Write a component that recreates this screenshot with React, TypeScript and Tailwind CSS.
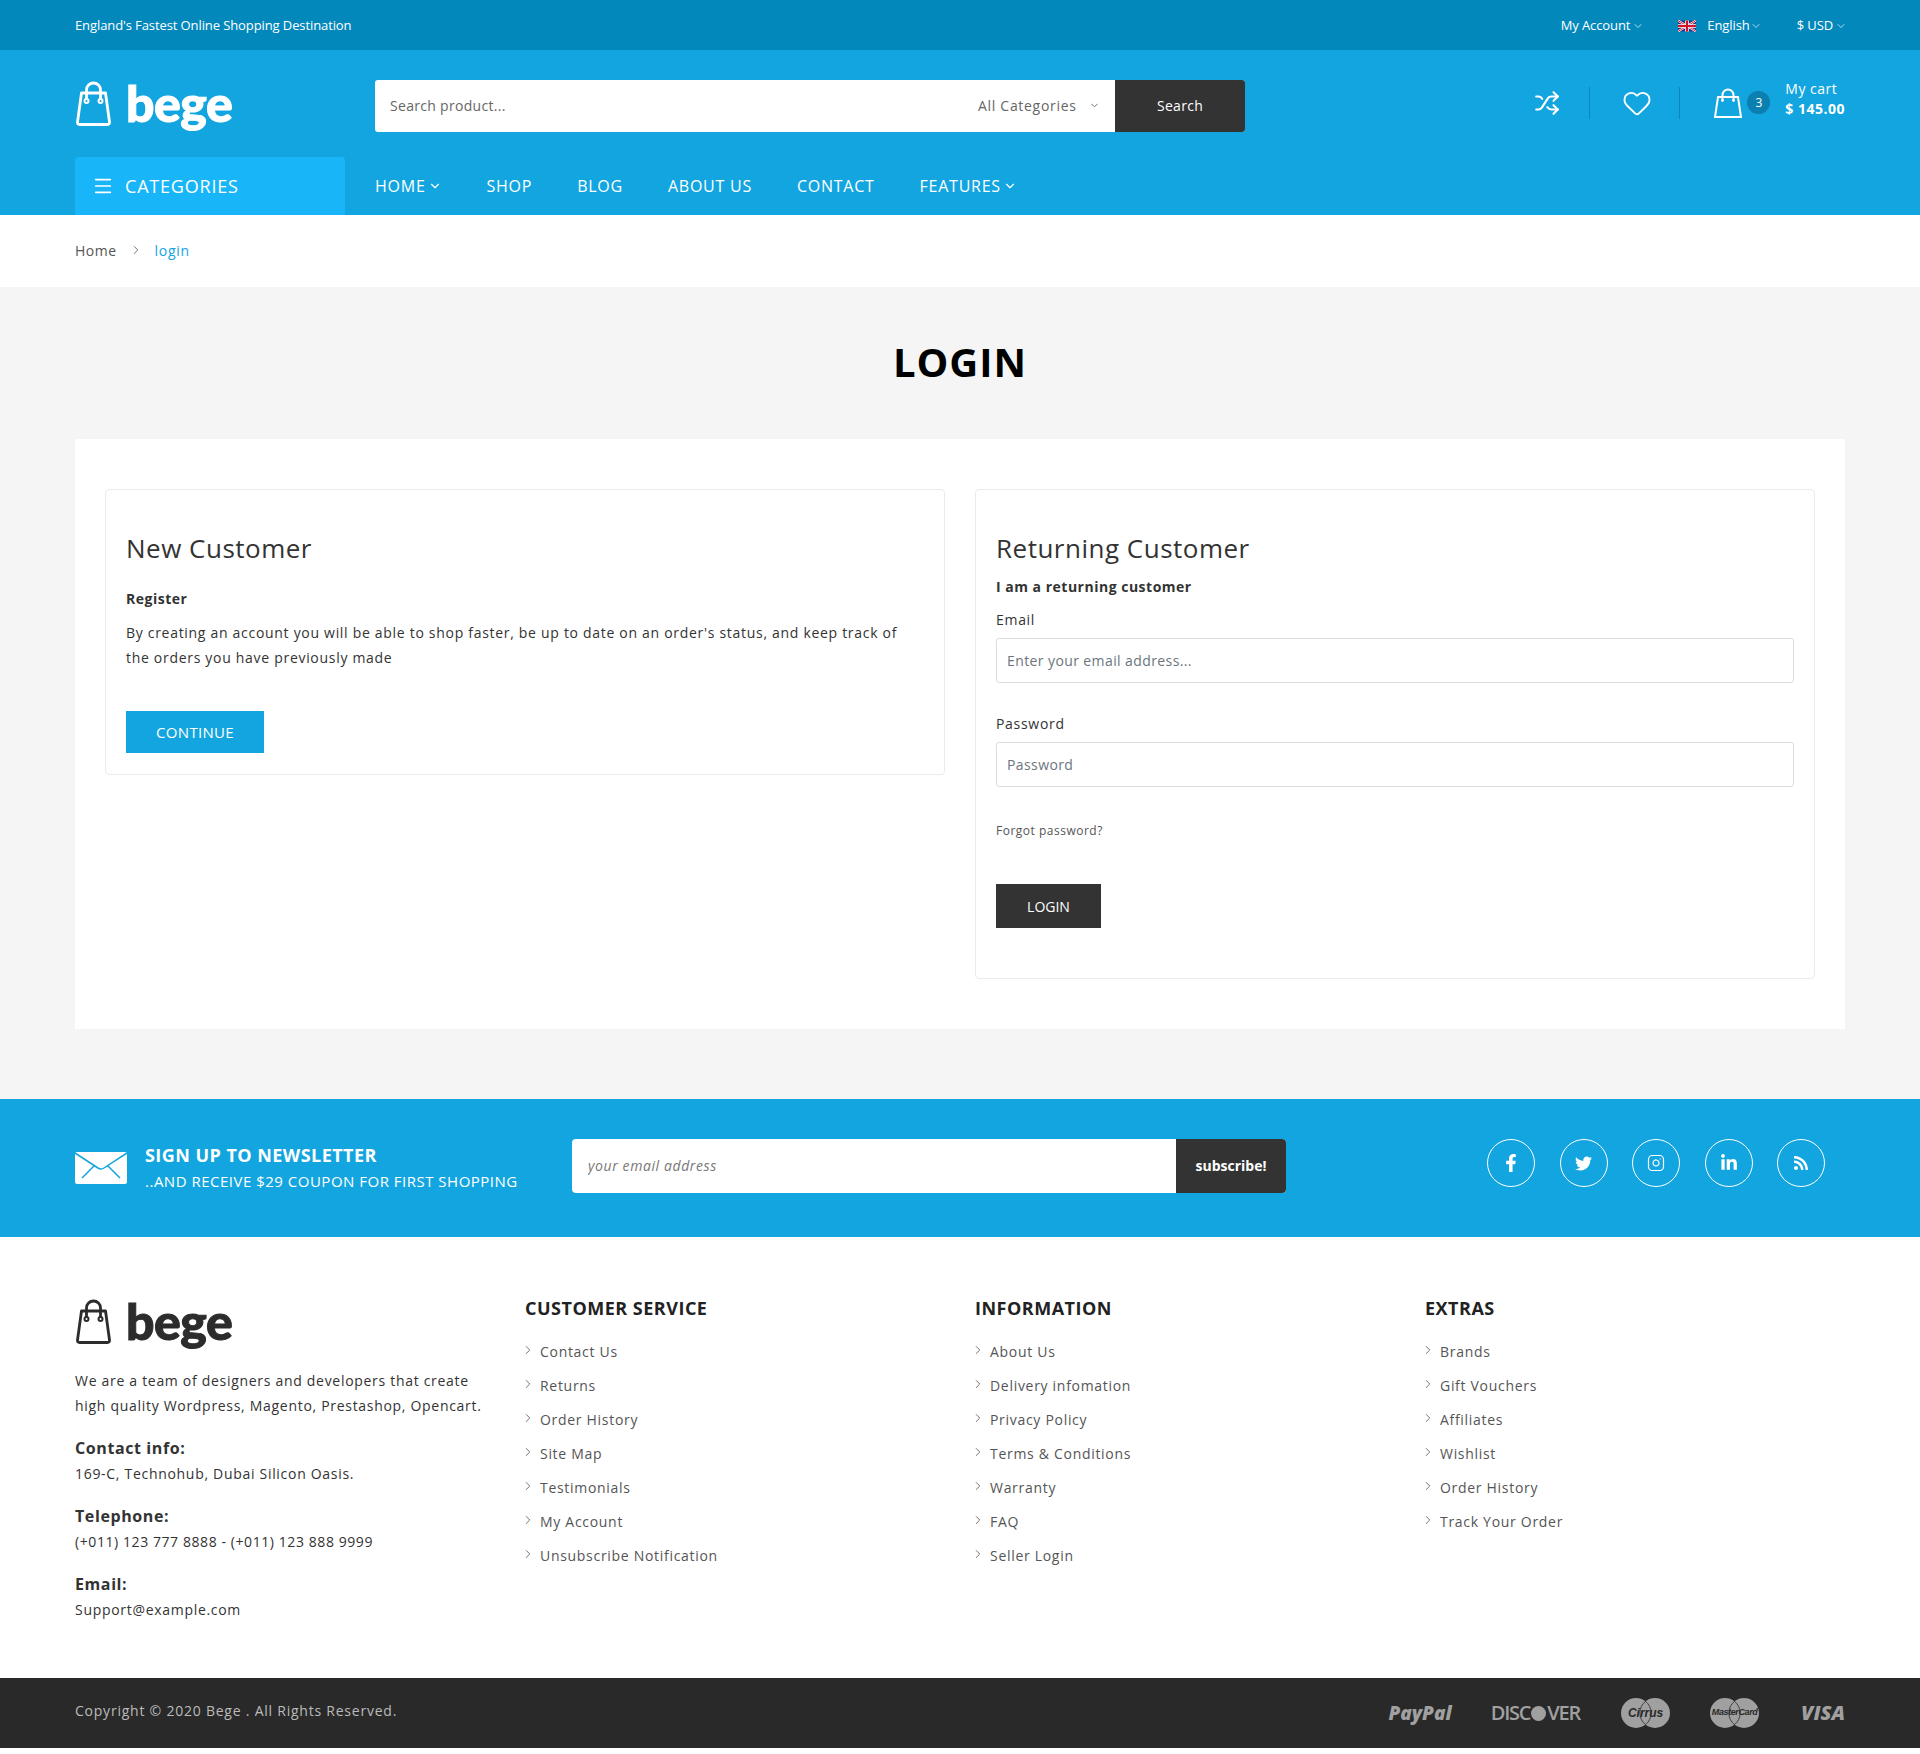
import { ChevronDown, ChevronRight, Heart, Instagram, Menu, Shuffle } from 'lucide-react';
import { FaFacebookF, FaLinkedinIn, FaRss, FaTwitter } from 'react-icons/fa';

const customerService = ['Contact Us', 'Returns', 'Order History', 'Site Map', 'Testimonials', 'My Account', 'Unsubscribe Notification'];
const information = ['About Us', 'Delivery infomation', 'Privacy Policy', 'Terms & Conditions', 'Warranty', 'FAQ', 'Seller Login'];
const extras = ['Brands', 'Gift Vouchers', 'Affiliates', 'Wishlist', 'Order History', 'Track Your Order'];

function BagIcon({ className }: { className?: string }) {
  return (
    <svg viewBox="0 0 36 46" fill="none" stroke="currentColor" className={className}>
      <path d="M6 13h24l4 29q.2 2.500-2 2.500H4q-2.200 0-2-2.500z" strokeWidth="2.800" strokeLinejoin="round" />
      <path d="M11 19v-9a7 7 0 0 1 14 0v9" strokeWidth="2.800" />
      <circle cx="11" cy="21" r="2" strokeWidth="2" />
      <circle cx="25" cy="21" r="2" strokeWidth="2" />
    </svg>
  );
}

function Logo({ className }: { className?: string }) {
  return (
    <div className={`flex h-[52px] items-center ${className}`}>
      <BagIcon className="h-[46px] w-[37px]" />
      <span className="ml-[14px] font-['Lato'] text-[50px] leading-none font-black tracking-[-0.5px] [-webkit-text-stroke:1px_currentColor]">
        bege
      </span>
    </div>
  );
}

function UkFlag() {
  return (
    <svg viewBox="0 0 60 36" className="h-3 w-[18px]">
      <rect width="60" height="36" fill="#23367e" />
      <path d="M0 0l60 36M60 0L0 36" stroke="#fff" strokeWidth="7" />
      <path d="M0 0l60 36M60 0L0 36" stroke="#d3122a" strokeWidth="3" />
      <path d="M30 0v36M0 18h60" stroke="#fff" strokeWidth="12" />
      <path d="M30 0v36M0 18h60" stroke="#d3122a" strokeWidth="7" />
    </svg>
  );
}

function TopBar() {
  return (
    <div className="flex h-[50px] items-center justify-between bg-[#0388bc] px-[75px] pt-px text-[13px] tracking-[-0.1px] text-white">
      <span>England's Fastest Online Shopping Destination</span>
      <div className="-mr-[2px] flex items-center">
        <span className="flex items-center gap-0.5">
          My Account <ChevronDown size={12} strokeWidth={1.4} />
        </span>
        <span className="ml-[34px] flex items-center">
          <UkFlag />
          <span className="ml-[11px]">English</span>
          <ChevronDown size={12} strokeWidth={1.4} />
        </span>
        <span className="ml-[35px] flex items-center gap-0.5">
          $ USD <ChevronDown size={12} strokeWidth={1.4} />
        </span>
      </div>
    </div>
  );
}

function BagShop() {
  return (
    <div className="flex items-center">
      <svg viewBox="0 0 28 30" fill="none" stroke="currentColor" strokeWidth="2" className="h-[30px] w-7">
        <path d="M4 9h20l3 20H1z" />
        <path d="M8.500 12V7a5.500 5.500 0 0 1 11 0v5" />
        <circle cx="8.500" cy="12.500" r="1" fill="currentColor" strokeWidth="1" />
        <circle cx="19.500" cy="12.500" r="1" fill="currentColor" strokeWidth="1" />
      </svg>
      <span className="ml-[5px] flex size-[23px] items-center justify-center rounded-full bg-[#0b7fb0] text-[12px]">3</span>
    </div>
  );
}

function Header() {
  return (
    <div className="bg-[#13a5df] text-white">
      <div className="flex h-[107px] items-center px-[75px] pb-[2px]">
        <Logo className="w-[300px]" />
        <div className="mt-[6px] flex h-[52px] w-[870px] overflow-hidden rounded-[3px] bg-white text-[14px] tracking-[0.5px]">
          <input
            placeholder="Search product..."
            className="min-w-0 flex-1 pl-[15px] font-['Open_Sans'] text-[14px] tracking-[0.3px] outline-none placeholder:text-[#666]"
          />
          <div className="flex w-[137px] items-center gap-3 tracking-[0.7px] text-[#666]">
            All Categories <ChevronDown size={11} strokeWidth={2} />
          </div>
          <button className="w-[130px] bg-[#333] tracking-[0.3px] text-white">Search</button>
        </div>
        <div className="ml-auto flex items-center">
          <Shuffle size={26} strokeWidth={1.9} />
          <div className="mr-[32px] ml-[29px] h-8 w-px bg-[#0b87b9]" />
          <Heart size={30} strokeWidth={1.5} />
          <div className="mr-[34px] ml-[27px] h-8 w-px bg-[#0b87b9]" />
          <BagShop />
          <div className="ml-[15px] -mt-[7px] text-[14px] leading-[20px] tracking-[0.5px]">
            <div>My cart</div>
            <div className="font-bold">$ 145.00</div>
          </div>
        </div>
      </div>
      <div className="flex h-[58px] items-stretch pl-[75px]">
        <div className="flex w-[270px] items-center rounded-t-[4px] bg-[#18b6f8] pl-[17px] text-[18px] font-medium tracking-[0.8px]">
          <Menu size={22} strokeWidth={1.8} className="mr-[11px]" />
          CATEGORIES
        </div>
        <nav className="ml-[30px] flex items-center gap-[45px] text-[16px] font-medium tracking-[0.75px]">
          <span className="flex items-center gap-[2px]">
            HOME <ChevronDown size={14} strokeWidth={2} />
          </span>
          <span>SHOP</span>
          <span>BLOG</span>
          <span>ABOUT US</span>
          <span>CONTACT</span>
          <span className="flex items-center gap-[2px]">
            FEATURES <ChevronDown size={14} strokeWidth={2} />
          </span>
        </nav>
      </div>
    </div>
  );
}

function CustomerCards() {
  return (
    <div className="flex items-start gap-[30px] bg-white px-[30px] py-[50px]">
      <div className="flex-1 rounded-[4px] border border-[#ebebeb] px-5 pt-[42px] pb-[21px]">
        <h2 className="text-[26px] leading-[32px] font-medium tracking-[0.5px] text-[#333]">New Customer</h2>
        <p className="mt-[25px] text-[14px] leading-[20px] font-bold tracking-[0.5px] text-[#333]">Register</p>
        <p className="mt-[11px] text-[14px] leading-[25px] tracking-[0.7px] text-[#333]">
          By creating an account you will be able to shop faster, be up to date on an order's status, and keep track of the orders you have previously made
        </p>
        <button className="mt-[41px] h-[42px] w-[138px] bg-[#13a5df] text-[15px] tracking-[0.3px] text-white">CONTINUE</button>
      </div>
      <div className="flex-1 rounded-[4px] border border-[#ebebeb] px-5 pt-[42px] pb-[50px]">
        <h2 className="text-[26px] leading-[32px] font-medium tracking-[0.5px] text-[#333]">Returning Customer</h2>
        <p className="mt-[13px] text-[14px] leading-[20px] font-bold tracking-[0.5px] text-[#333]">I am a returning customer</p>
        <label className="mt-[13px] block text-[14px] leading-[20px] tracking-[0.7px] text-[#333]">Email</label>
        <input
          placeholder="Enter your email address..."
          className="mt-[8px] block h-[45px] w-full rounded-[3px] border border-[#ddd] px-[10px] text-[14px] tracking-[0.4px] outline-none placeholder:text-[#6c757d]"
        />
        <label className="mt-[31px] block text-[14px] leading-[20px] tracking-[0.7px] text-[#333]">Password</label>
        <input
          placeholder="Password"
          className="mt-[8px] block h-[45px] w-full rounded-[3px] border border-[#ddd] px-[10px] text-[14px] tracking-[0.4px] outline-none placeholder:text-[#6c757d]"
        />
        <p className="mt-[35px] text-[12px] leading-[18px] tracking-[0.5px] text-[#555]">Forgot password?</p>
        <button className="mt-[44px] h-[44px] w-[105px] bg-[#333] text-[14px] text-white">LOGIN</button>
      </div>
    </div>
  );
}

function Newsletter() {
  return (
    <div className="flex h-[138px] items-start bg-[#13a5df] px-[75px] pt-10 text-white">
      <svg viewBox="0 0 52 32" className="mt-[13px] h-8 w-[52px] shrink-0">
        <rect width="52" height="32" rx="2" fill="#fff" />
        <path d="M0 1l23 15q3 2 6 0L52 1M7 26l13-13M45 26L32 13" fill="none" stroke="#13a5df" strokeWidth="1.500" />
      </svg>
      <div className="ml-[18px] w-[427px]">
        <div className="mt-[2px] text-[18px] leading-[28px] font-bold tracking-[0.45px]">SIGN UP TO NEWSLETTER</div>
        <div className="text-[15px] leading-[24px] tracking-[0.5px]">..AND RECEIVE $29 COUPON FOR FIRST SHOPPING</div>
      </div>
      <div className="flex h-[54px] w-[714px] overflow-hidden rounded-[4px] bg-white">
        <input
          placeholder="your email address"
          className="min-w-0 flex-1 -translate-y-px pl-[16px] text-[14px] italic tracking-[0.6px] outline-none placeholder:text-[#777]"
        />
        <button className="w-[110px] bg-[#333] pb-[2px] text-[14px] font-bold">subscribe!</button>
      </div>
      <div className="ml-auto flex gap-[24.500px] pr-5">
        <a className="flex size-12 items-center justify-center rounded-full border border-white"><FaFacebookF size={18} /></a>
        <a className="flex size-12 items-center justify-center rounded-full border border-white"><FaTwitter size={17} /></a>
        <a className="flex size-12 items-center justify-center rounded-full border border-white"><Instagram size={18} strokeWidth={1.6} /></a>
        <a className="flex size-12 items-center justify-center rounded-full border border-white"><FaLinkedinIn size={18} /></a>
        <a className="flex size-12 items-center justify-center rounded-full border border-white"><FaRss size={16} /></a>
      </div>
    </div>
  );
}

function LinkColumn({ title, links }: { title: string; links: string[] }) {
  return (
    <div className="pt-[58px]">
      <h3 className="text-[18px] leading-[26px] font-bold tracking-[0.5px] text-[#222]">{title}</h3>
      <ul className="mt-[13px]">
        {links.map((link) => (
          <li key={link} className="flex h-[34px] items-center text-[14px] tracking-[0.7px] text-[#555]">
            <ChevronRight size={14} strokeWidth={1.4} className="mr-[2px] -ml-[4px] -translate-y-px" />
            <span className="ml-[3px]">{link}</span>
          </li>
        ))}
      </ul>
    </div>
  );
}

function Footer() {
  return (
    <div className="grid h-[441px] grid-cols-[450px_450px_450px_1fr] px-[75px] text-[#333]">
      <div className="pt-[58px] pr-[30px]">
        <Logo className="text-[#2c2c2c]" />
        <p className="mt-[21px] text-[14px] leading-[25px] tracking-[0.7px]">
          We are a team of designers and developers that create high quality Wordpress, Magento, Prestashop, Opencart.
        </p>
        <h4 className="mt-[18px] text-[16px] leading-[25px] font-bold tracking-[0.6px]">Contact info:</h4>
        <p className="text-[14px] leading-[25px] tracking-[0.7px]">169-C, Technohub, Dubai Silicon Oasis.</p>
        <h4 className="mt-[18px] text-[16px] leading-[25px] font-bold tracking-[0.6px]">Telephone:</h4>
        <p className="text-[14px] leading-[25px] tracking-[0.58px]">(+011) 123 777 8888 - (+011) 123 888 9999</p>
        <h4 className="mt-[18px] text-[16px] leading-[25px] font-bold tracking-[0.6px]">Email:</h4>
        <p className="text-[14px] leading-[25px] tracking-[0.7px]">Support@example.com</p>
      </div>
      <LinkColumn title="CUSTOMER SERVICE" links={customerService} />
      <LinkColumn title="INFORMATION" links={information} />
      <LinkColumn title="EXTRAS" links={extras} />
    </div>
  );
}

function CardLogo({ label, textClass }: { label: string; textClass: string }) {
  return (
    <div className="relative h-[30px] w-[49px]">
      <svg viewBox="0 0 49 30" className="absolute inset-0 h-[30px] w-[49px]">
        <circle cx="15" cy="15" r="15" fill="#a0a0a0" />
        <circle cx="34" cy="15" r="15" fill="#a0a0a0" />
        <path d="M24.500 3.300a15 15 0 0 1 0 23.400a15 15 0 0 1 0-23.400z" fill="none" stroke="#292929" strokeWidth="0.800" />
      </svg>
      <span className={`absolute inset-0 flex items-center justify-center font-['Liberation_Sans'] font-bold text-[#292929] ${textClass}`}>
        {label}
      </span>
    </div>
  );
}

function BottomBar() {
  return (
    <div className="flex h-[70px] items-center justify-between bg-[#292929] px-[75px]">
      <span className="-translate-y-[3px] text-[14px] tracking-[0.77px] text-[#bbb]">Copyright © 2020 Bege . All Rights Reserved.</span>
      <div className="flex items-center text-[#a0a0a0]">
        <span className="text-[19px] font-extrabold italic">PayPal</span>
        <span className="ml-[39px] flex items-center text-[20px] font-semibold tracking-[-1.2px]">
          DISC<span className="mx-[1px] inline-block size-[15px] rounded-full bg-[#a0a0a0]" />VER
        </span>
        <div className="ml-[41px]"><CardLogo label="Cirrus" textClass="text-[12px] italic" /></div>
        <div className="ml-[40px]"><CardLogo label="MasterCard" textClass="text-[9px] tracking-[-0.4px] italic" /></div>
        <span className="ml-[42px] text-[20px] font-extrabold italic">VISA</span>
      </div>
    </div>
  );
}

export default function App() {
  return (
    <div className="h-[1754px] bg-white font-['Open_Sans',sans-serif]">
      <TopBar />
      <Header />
      <div className="flex h-[72px] items-center px-[75px] pb-[2px] text-[14px] tracking-[0.5px] text-[#555]">
        Home
        <ChevronRight size={14} strokeWidth={1.4} className="mx-[12px]" />
        <span className="tracking-[0.7px] text-[#13a5df]">login</span>
      </div>
      <div className="bg-[#f5f5f5] px-[75px] pb-[70px]">
        <h1 className="flex h-[152px] items-center justify-center pb-[2px] text-[40px] font-bold tracking-[1px] text-black">LOGIN</h1>
        <CustomerCards />
      </div>
      <Newsletter />
      <Footer />
      <BottomBar />
    </div>
  );
}
